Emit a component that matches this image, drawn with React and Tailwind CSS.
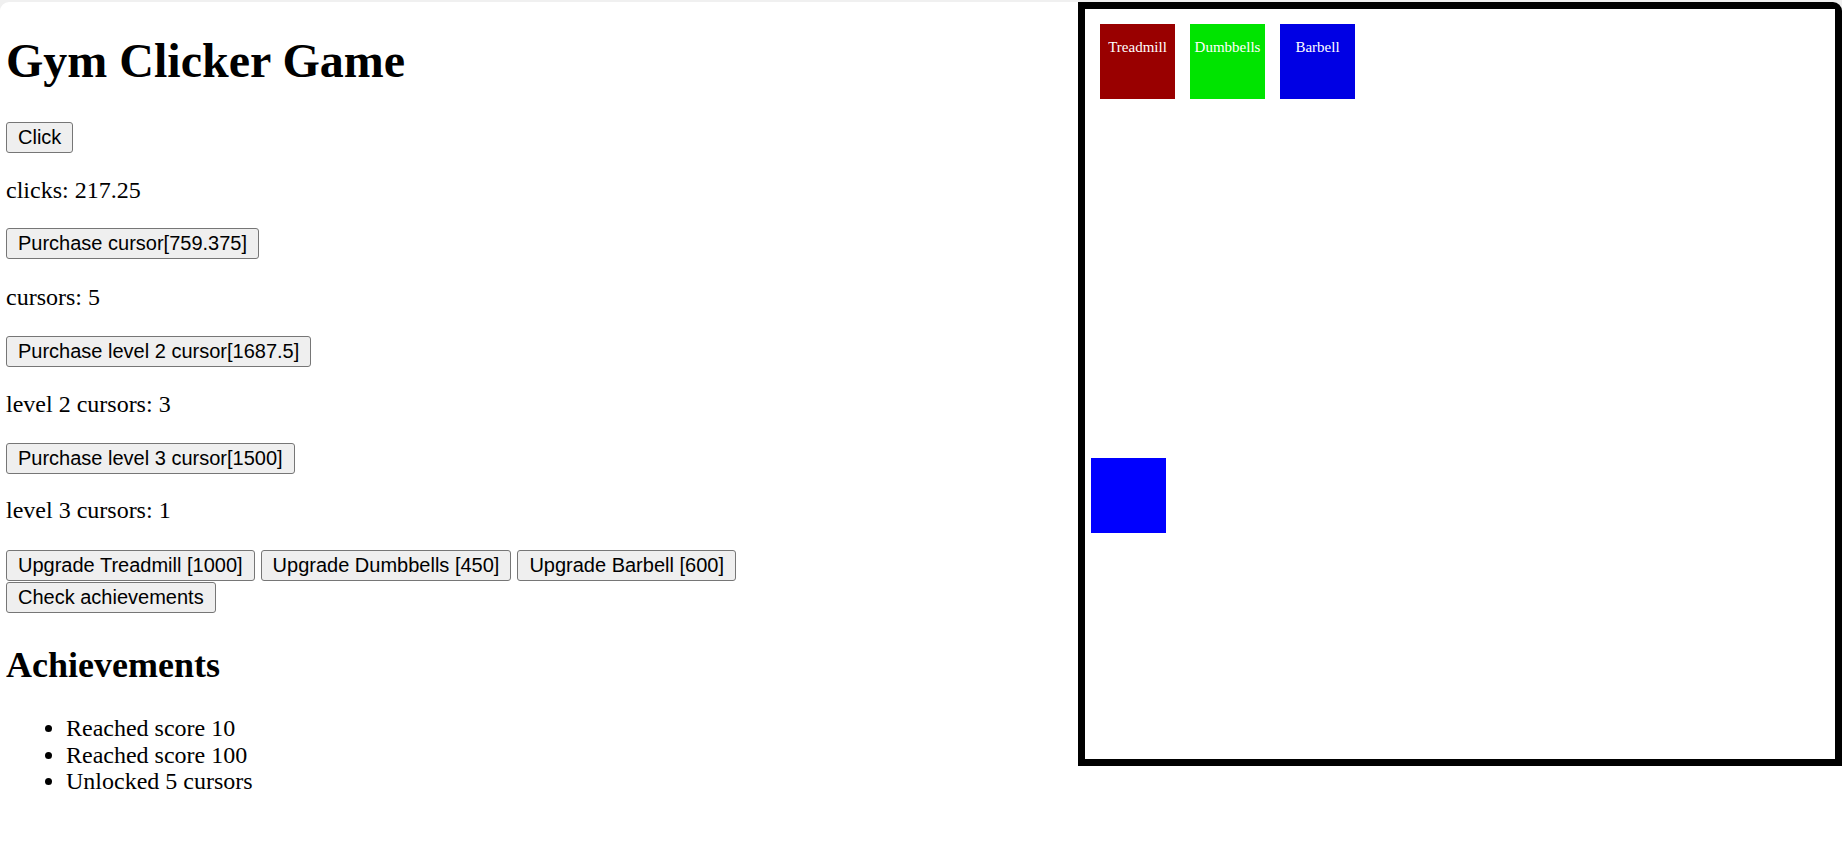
const btn =
  'h-[31px] px-[11px] border border-[#767676] rounded-[3px] bg-[#efefef] text-black text-[20px] leading-[29px] whitespace-nowrap'

function GameArea() {
  return (
    <div className="relative w-[764px] h-[764px] shrink-0 border-[7px] border-black bg-white">
      <div className="flex gap-[15px] p-[15px]">
        <div className="w-[75px] h-[75px] bg-[#990000] pt-[15px] text-center text-white text-[15px] leading-[17px]">
          Treadmill
        </div>
        <div className="w-[75px] h-[75px] bg-[#00e400] pt-[15px] text-center text-white text-[15px] leading-[17px]">
          Dumbbells
        </div>
        <div className="w-[75px] h-[75px] bg-[#0000e4] pt-[15px] text-center text-white text-[15px] leading-[17px]">
          Barbell
        </div>
      </div>
      {/* player */}
      <div className="absolute left-[6px] top-[449px] w-[75px] h-[75px] bg-[#0000ff]" />
    </div>
  )
}

export default function App() {
  const achievements = ['Reached score 10', 'Reached score 100', 'Unlocked 5 cursors']

  return (
    <div className="min-h-screen bg-[#f0f0f0] pt-[2px] font-['Liberation_Serif',serif] text-black">
      <div className="flex h-[853px] rounded-t-[9px] bg-white overflow-hidden">
        <div className="w-[1078px] shrink-0 pl-[6px]">
          <h1 className="mt-[32px] text-[48px] leading-[53px] font-bold">Gym Clicker Game</h1>

          <div className="mt-[35px] font-['Liberation_Sans',Arial,sans-serif]">
            <button className={btn}>Click</button>
          </div>
          <p className="mt-[24px] text-[24px] leading-[27px]">clicks: 217.25</p>

          <div className="mt-[24px] font-['Liberation_Sans',Arial,sans-serif]">
            <button className={btn}>Purchase cursor[759.375]</button>
          </div>
          <p className="mt-[25px] text-[24px] leading-[27px]">cursors: 5</p>

          <div className="mt-[25px] font-['Liberation_Sans',Arial,sans-serif]">
            <button className={btn}>Purchase level 2 cursor[1687.5]</button>
          </div>
          <p className="mt-[24px] text-[24px] leading-[27px]">level 2 cursors: 3</p>

          <div className="mt-[25px] font-['Liberation_Sans',Arial,sans-serif]">
            <button className={btn}>Purchase level 3 cursor[1500]</button>
          </div>
          <p className="mt-[23px] text-[24px] leading-[27px]">level 3 cursors: 1</p>

          <div className="mt-[26px] flex gap-[6px] font-['Liberation_Sans',Arial,sans-serif]">
            <button className={btn}>Upgrade Treadmill [1000]</button>
            <button className={btn}>Upgrade Dumbbells [450]</button>
            <button className={btn}>Upgrade Barbell [600]</button>
          </div>
          <div className="mt-[1px] font-['Liberation_Sans',Arial,sans-serif]">
            <button className={btn}>Check achievements</button>
          </div>

          <h2 className="mt-[32px] text-[36px] leading-[40px] font-bold">Achievements</h2>
          <ul className="mt-[30px] list-disc pl-[60px] text-[24px] leading-[26.5px]">
            {achievements.map((a) => (
              <li key={a}>{a}</li>
            ))}
          </ul>
        </div>

        <GameArea />
      </div>
    </div>
  )
}
